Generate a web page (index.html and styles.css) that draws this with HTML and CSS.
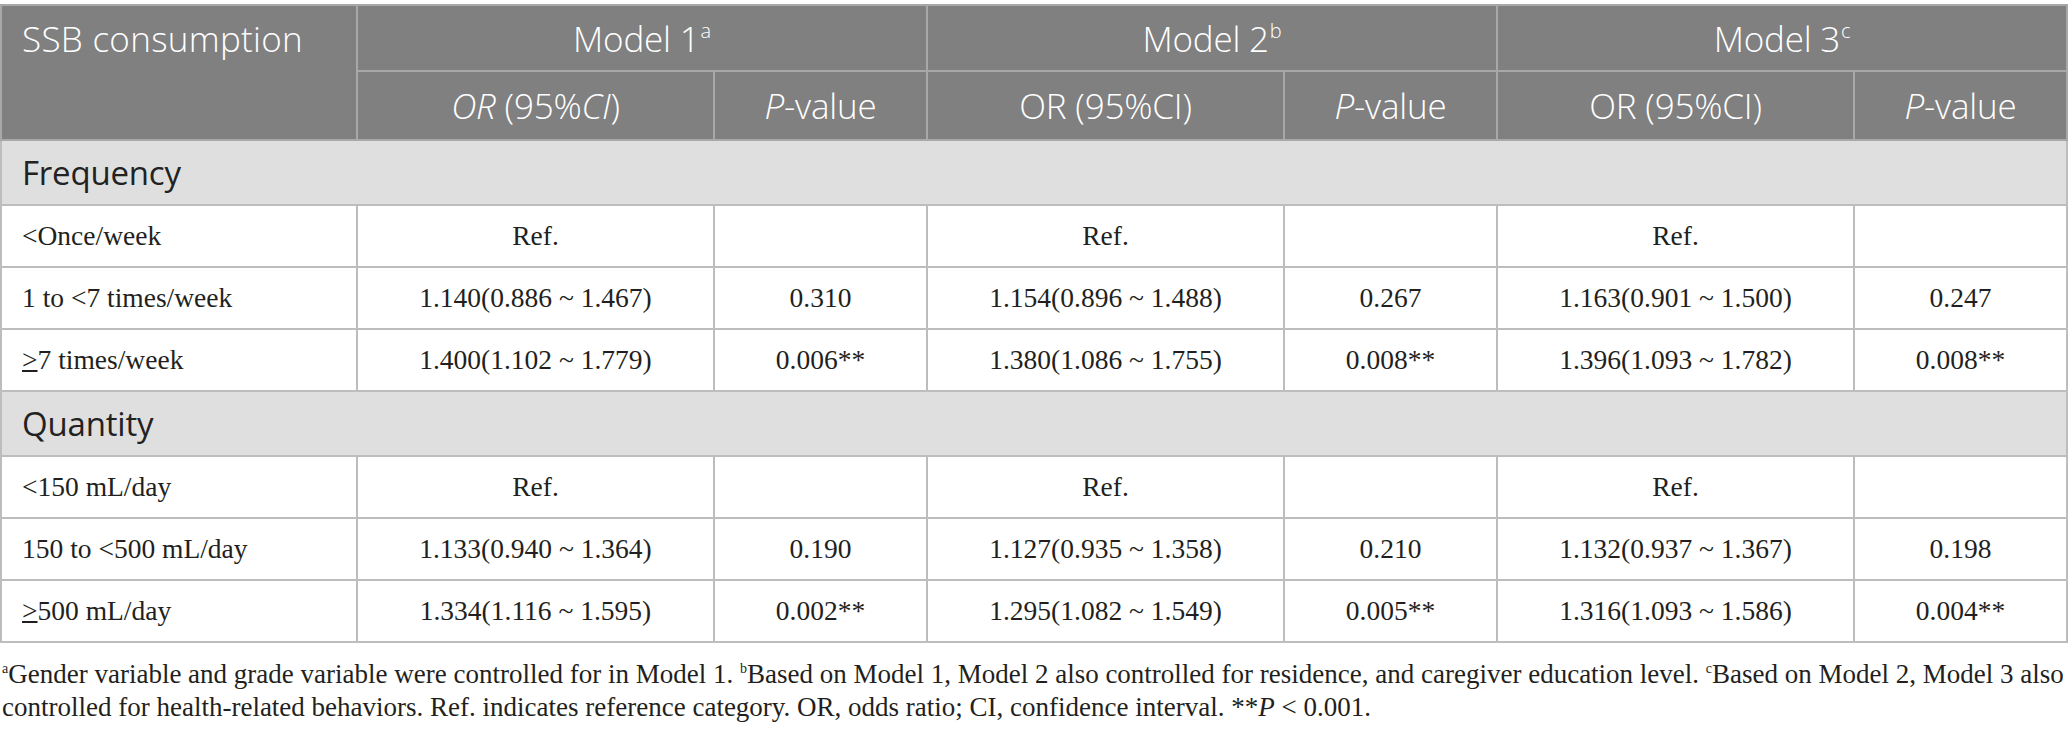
FILE: index.html
```html
<!DOCTYPE html>
<html>
<head>
<meta charset="utf-8">
<link rel="stylesheet" href="styles.css">
</head>
<body>
<div class="wrap">
<table class="tbl">
  <colgroup>
    <col class="c-label"><col class="c-or"><col class="c-p"><col class="c-or"><col class="c-p"><col class="c-or"><col class="c-p">
  </colgroup>
  <thead>
    <tr class="h1">
      <th class="lab" rowspan="2">SSB consumption</th>
      <th colspan="2">Model 1<sup>a</sup></th>
      <th colspan="2">Model 2<sup>b</sup></th>
      <th colspan="2">Model 3<sup>c</sup></th>
    </tr>
    <tr class="h2">
      <th><i>OR</i> (95%<i>CI</i>)</th>
      <th><i>P</i>-value</th>
      <th>OR (95%CI)</th>
      <th><i>P</i>-value</th>
      <th>OR (95%CI)</th>
      <th><i>P</i>-value</th>
    </tr>
  </thead>
  <tbody>
    <tr class="sec"><td colspan="7">Frequency</td></tr>
    <tr><td class="lab">&lt;Once/week</td><td>Ref.</td><td></td><td>Ref.</td><td></td><td>Ref.</td><td></td></tr>
    <tr><td class="lab">1 to &lt;7 times/week</td><td>1.140(0.886 ~ 1.467)</td><td>0.310</td><td>1.154(0.896 ~ 1.488)</td><td>0.267</td><td>1.163(0.901 ~ 1.500)</td><td>0.247</td></tr>
    <tr><td class="lab"><u>&gt;</u>7 times/week</td><td>1.400(1.102 ~ 1.779)</td><td>0.006**</td><td>1.380(1.086 ~ 1.755)</td><td>0.008**</td><td>1.396(1.093 ~ 1.782)</td><td>0.008**</td></tr>
    <tr class="sec"><td colspan="7">Quantity</td></tr>
    <tr><td class="lab">&lt;150 mL/day</td><td>Ref.</td><td></td><td>Ref.</td><td></td><td>Ref.</td><td></td></tr>
    <tr><td class="lab">150 to &lt;500 mL/day</td><td>1.133(0.940 ~ 1.364)</td><td>0.190</td><td>1.127(0.935 ~ 1.358)</td><td>0.210</td><td>1.132(0.937 ~ 1.367)</td><td>0.198</td></tr>
    <tr><td class="lab"><u>&gt;</u>500 mL/day</td><td>1.334(1.116 ~ 1.595)</td><td>0.002**</td><td>1.295(1.082 ~ 1.549)</td><td>0.005**</td><td>1.316(1.093 ~ 1.586)</td><td>0.004**</td></tr>
  </tbody>
</table>
<p class="note"><sup>a</sup>Gender variable and grade variable were controlled for in Model 1. <sup>b</sup>Based on Model 1, Model 2 also controlled for residence, and caregiver education level. <sup>c</sup>Based on Model 2, Model 3 also controlled for health-related behaviors. Ref. indicates reference category. OR, odds ratio; CI, confidence interval. **<i>P</i> &lt; 0.001.</p>
</div>
</body>
</html>
```

FILE: styles.css
```css
html, body {
  margin: 0;
  padding: 0;
  background: #ffffff;
}
.wrap {
  width: 2068px;
  padding-top: 4px;
}
.tbl {
  width: 2067px;
  border-collapse: collapse;
  table-layout: fixed;
  font-family: "Liberation Serif", "Times New Roman", serif;
  font-size: 27.5px;
  color: #231f20;
}
.c-label { width: 356px; }
.c-or { width: 357px; }
.c-p { width: 213px; }

.tbl th {
  background: #7f807f;
  color: #ffffff;
  font-family: "Open Sans", "Noto Sans", sans-serif;
  font-weight: 300;
  font-size: 35px;
  border: 2px solid #a7a8a7;
  text-align: center;
  padding: 0 10px;
  letter-spacing: -0.2px;
}
.tbl th.lab { letter-spacing: 0.3px; }
.tbl th sup {
  font-size: 20px;
  vertical-align: 14px;
  line-height: 0;
  margin-left: 1px;
}
.tbl .h1 th { height: 64px; }
.tbl .h2 th { height: 67px; }
.tbl th.lab {
  text-align: left;
  vertical-align: top;
  padding: 9px 20px 0;
}
.tbl td {
  border: 2px solid #bdbdbd;
  text-align: center;
  height: 60px;
  padding: 0 10px;
}
.tbl td.lab {
  text-align: left;
  padding-left: 20px;
}
.tbl td u {
  text-decoration-thickness: 2px;
  text-underline-offset: 1px;
}
.tbl tr.sec td {
  background: #e0dfe0;
  text-align: left;
  font-family: "Open Sans", "Noto Sans", sans-serif;
  font-size: 33px;
  padding-left: 20px;
  height: 63px;
  color: #222222;
  letter-spacing: -0.2px;
}
.note {
  margin: 15px 0 0;
  padding: 0 2px;
  font-family: "Liberation Serif", "Times New Roman", serif;
  font-size: 27px;
  line-height: 33px;
  color: #231f20;
}
.note sup {
  font-size: 14px;
  vertical-align: 10px;
  line-height: 0;
}
```
